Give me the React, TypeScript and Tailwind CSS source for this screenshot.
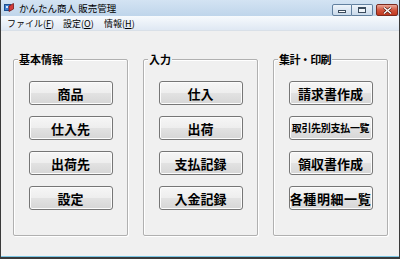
import React from 'react';

const groups = [
  { title: '基本情報', items: ['商品', '仕入先', '出荷先', '設定'] },
  { title: '入力', items: ['仕入', '出荷', '支払記録', '入金記録'] },
  { title: '集計・印刷', items: ['請求書作成', '取引先別支払一覧', '領収書作成', '各種明細一覧'] },
];

const menus = [
  { label: 'ファイル', key: 'F', w: 'w-[56px]' },
  { label: '設定', key: 'O', w: 'w-[41px]' },
  { label: '情報', key: 'H', w: 'w-[40px]' },
];

const AppIcon = () => (
  <svg width="10" height="9" viewBox="0 0 10 9">
    <rect x="0.5" y="1.5" width="6" height="6" fill="#3d7fd0" stroke="#1d4f8f" strokeWidth="1" />
    <path d="M5 3 L9.5 0.5 L9.5 6 L5 8.5 Z" fill="#d23b3b" stroke="#7a1a1a" strokeWidth="0.8" />
    <rect x="2" y="3" width="2" height="2" fill="#cfe4ff" />
  </svg>
);

const MenuButton = ({ btn }: { btn: string }) => (
  <button
    className={
      (btn === '取引先別支払一覧'
        ? 'text-[10px] tracking-[-0.3px] '
        : btn === '各種明細一覧'
        ? 'text-[13px] tracking-[0.6px] '
        : 'text-[13px] ') +
      'w-[84px] h-[24px] shrink-0 flex items-center justify-center whitespace-nowrap overflow-visible border border-[#767676] rounded-[3px] bg-[linear-gradient(to_bottom,#f6f6f6_0%,#eeeeee_48%,#e2e2e2_52%,#d6d6d6_100%)] shadow-[inset_0_0_0_1px_#fcfcfc] font-bold text-black leading-none'
    }
  >
    {btn}
  </button>
);

export default function App() {
  return (
    <div className="w-[400px] h-[259px] flex flex-col border-l border-r border-b-2 border-[#3a3a3a] bg-[#f0f0f0] font-['Noto_Sans_CJK_JP','Noto_Sans_CJK_SC',sans-serif] overflow-hidden">
      {/* title bar */}
      <div className="h-[16px] flex items-start bg-[linear-gradient(to_bottom,#d3e3f3,#bfd5eb)]">
        <div className="pl-[3px] pt-[3px]">
          <AppIcon />
        </div>
        <div className="pl-[5px] text-[9.5px] leading-[16px] text-black">かんたん商人 販売管理</div>
        <div className="ml-auto flex pt-[4px] pr-[1px]">
          <div className="w-[20px] h-[12px] flex items-end justify-center pb-[2px] border border-[#62809f] rounded-l-[2px] bg-[linear-gradient(to_bottom,#eef4fa,#c9d9ea)]">
            <div className="w-[8px] h-[3px] bg-white border border-[#3b4c5e]" />
          </div>
          <div className="w-[21px] h-[12px] flex items-center justify-center border border-l-0 border-[#62809f] rounded-r-[2px] bg-[linear-gradient(to_bottom,#eef4fa,#c9d9ea)]">
            <div className="w-[8px] h-[6px] border border-t-2 border-[#3b4c5e] bg-white/60" />
          </div>
          <div className="ml-[3px] w-[22px] h-[12px] flex items-center justify-center border border-[#7a2a20] rounded-[2px] bg-[linear-gradient(to_bottom,#e9a899,#d2553f_50%,#c0391f)]">
            <svg width="9" height="7" viewBox="0 0 9 7">
              <path d="M1 0.5 L8 6.5 M8 0.5 L1 6.5" stroke="#4a1810" strokeWidth="2.6" />
              <path d="M1 0.5 L8 6.5 M8 0.5 L1 6.5" stroke="#fff" strokeWidth="1.4" />
            </svg>
          </div>
        </div>
      </div>

      {/* menu bar */}
      <div className="h-[14px] flex items-center pl-[6px] bg-[linear-gradient(to_bottom,#f7fafd,#dfe8f3)] text-[9px] leading-none text-black">
        {menus.map((m) => (
          <span key={m.key} className={m.w + ' whitespace-nowrap'}>
            {m.label}(<span className="underline">{m.key}</span>)
          </span>
        ))}
      </div>
      <div className="h-px bg-[#d9e0e8]" />

      {/* client */}
      <div className="flex-1 flex gap-[15px] pl-[12px] pt-[28px]">
        {groups.map((g) => (
          <div
            key={g.title}
            className="relative w-[115px] h-[177px] border border-[#b0b0b0] rounded-[2px] shadow-[inset_1px_1px_0_#fff,1px_1px_0_#fff]"
          >
            <span
              className={
                (g.title.includes('・') ? 'tracking-[-0.6px] ' : '') +
                'absolute left-[4px] top-[-7px] px-[1px] bg-[#f0f0f0] text-[11px] leading-[13px] font-bold text-black whitespace-nowrap'
              }
            >
              {g.title}
            </span>
            <div className="flex flex-col items-center gap-[11px] pt-[21px]">
              {g.items.map((b) => (
                <MenuButton key={b} btn={b} />
              ))}
            </div>
          </div>
        ))}
      </div>
      <div className="h-px bg-[#7cc6e4]" />
    </div>
  );
}
